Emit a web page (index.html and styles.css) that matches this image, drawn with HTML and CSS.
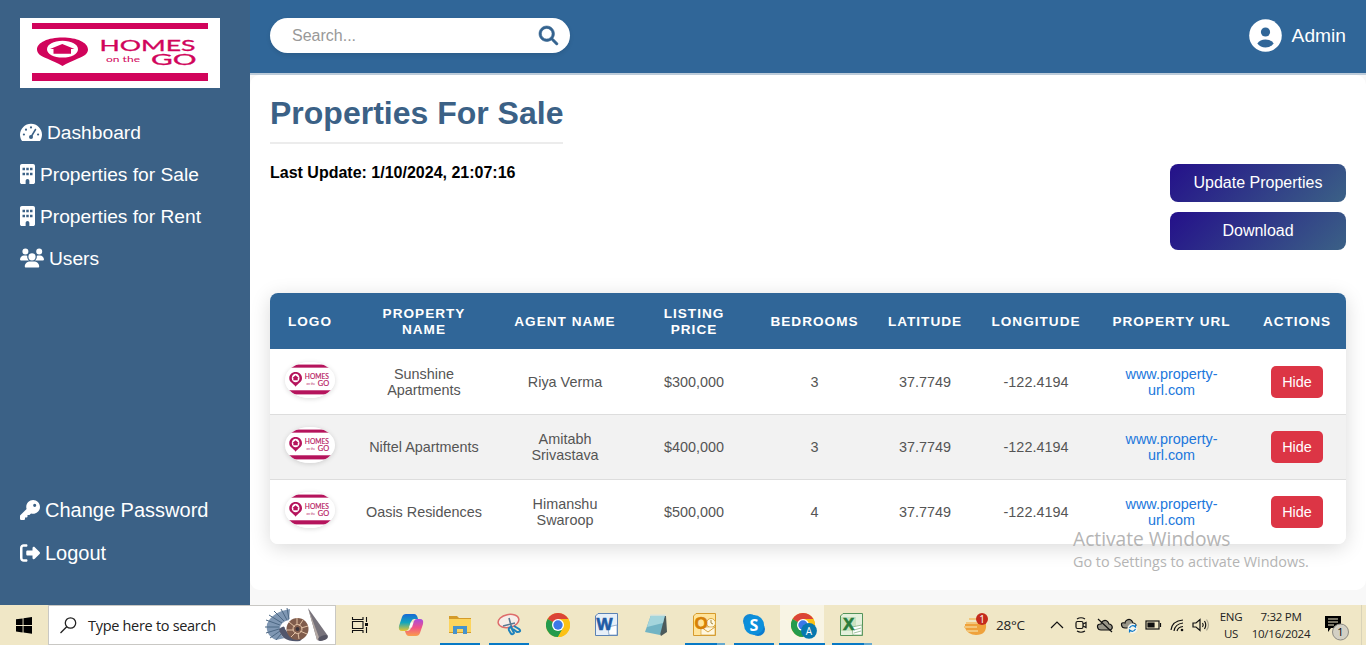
FILE: index.html
```html
<!DOCTYPE html>
<html lang="en">
<head>
<meta charset="utf-8">
<title>Properties For Sale</title>
<link rel="stylesheet" href="styles.css">
</head>
<body>
<svg class="defs" width="0" height="0">
  <symbol id="logo" viewBox="0 0 200 70" preserveAspectRatio="none">
    <rect width="200" height="70" fill="#fff"/>
    <g fill="currentColor">
      <rect x="12" y="5" width="176" height="6"/>
      <rect x="12" y="55" width="176" height="8"/>
      <path fill-rule="evenodd" d="M42.500 48C38 45 33 43.500 27 40.500C20 38 17 35 17 31.500C17 24.500 28 19.500 42.500 19.500S68 24.500 68 31.500C68 35 65 38 58 40.500C52 43.500 47 45 42.500 48ZM42.500 22.800C33.500 22.800 27 26.500 27 31.200S33.500 39.500 42.500 39.500S58 35.900 58 31.200S51.500 22.800 42.500 22.800Z"/>
      <path d="M42.300 26L54.500 31H51V35.700H33.500V31H30Z"/>
      <g font-family="Lato, sans-serif">
        <text x="79.500" y="33" font-size="15" textLength="96" lengthAdjust="spacingAndGlyphs" stroke="currentColor" stroke-width=".3">HOMES</text>
        <text x="86" y="44" font-size="7.500" textLength="34" lengthAdjust="spacingAndGlyphs">on the</text>
        <text x="131" y="47.300" font-size="14.500" textLength="45.500" lengthAdjust="spacingAndGlyphs" stroke="currentColor" stroke-width=".3">GO</text>
      </g>
    </g>
  </symbol>
  <symbol id="building" viewBox="0 0 384 512">
    <path fill-rule="evenodd" d="M48 0C21.500 0 0 21.500 0 48V464c0 26.500 21.500 48 48 48h96V432c0-26.500 21.500-48 48-48s48 21.500 48 48v80h96c26.500 0 48-21.500 48-48V48c0-26.500-21.500-48-48-48H48zM64 96h64v64H64zM160 96h64v64h-64zM256 96h64v64h-64zM64 224h64v64H64zM160 224h64v64h-64zM256 224h64v64h-64z"/>
  </symbol>
  <symbol id="chrome" viewBox="0 0 24 24">
    <circle cx="12" cy="12" r="12" fill="#fbc116"/>
    <path d="M12 12L1.600 6A12 12 0 0 1 22.400 6Z" fill="#db4437"/>
    <path d="M12 12L1.600 6A12 12 0 0 0 12 24L17 15Z" fill="#249b4d"/>
    <path d="M12 6H22.400A12 12 0 0 1 12 24L17.200 15Z" fill="#fbc116"/>
    <circle cx="12" cy="12" r="6" fill="#fff"/>
    <circle cx="12" cy="12" r="4.700" fill="#3b78e7"/>
  </symbol>
</svg>

<div class="app">
  <aside class="sidebar">
    <svg class="brand"><use href="#logo"/></svg>
    <nav class="nav">
      <a class="nav-item"><svg width="22" height="19" viewBox="0 0 22 19"><path d="M11 .8A11 11 0 0 0 0 11.600C0 13.800.6 15.700 1.500 17.200Q2 18.100 3 18.100H19Q20 18.100 20.500 17.200C21.400 15.700 22 13.800 22 11.600A11 11 0 0 0 11 .8Z"/><g class="dial"><circle cx="3.900" cy="11.500" r="1.100"/><circle cx="6" cy="6.700" r="1.100"/><circle cx="11" cy="4.400" r="1.100"/><circle cx="18.100" cy="11.500" r="1.100"/><circle cx="11" cy="14" r="2"/><path d="M11 14L15.500 6.500" fill="none" stroke="#3b6186" stroke-width="1.500" stroke-linecap="round"/></g></svg><span>Dashboard</span></a>
      <a class="nav-item"><svg width="15" height="20"><use href="#building"/></svg><span>Properties for Sale</span></a>
      <a class="nav-item"><svg width="15" height="20"><use href="#building"/></svg><span>Properties for Rent</span></a>
      <a class="nav-item"><svg width="24" height="20" viewBox="0 0 640 512"><path d="M144 0a80 80 0 1 1 0 160A80 80 0 1 1 144 0zM512 0a80 80 0 1 1 0 160A80 80 0 1 1 512 0zM0 298.700C0 239.800 47.800 192 106.700 192h42.700c15.900 0 31 3.500 44.600 9.700c-1.300 7.200-1.900 14.700-1.900 22.300c0 38.200 16.800 72.500 43.300 96H21.300C9.600 320 0 310.400 0 298.700zM405.300 320c26.600-23.500 43.300-57.800 43.300-96c0-7.600-.7-15-1.900-22.300c13.600-6.300 28.700-9.700 44.600-9.700h42.700C592.200 192 640 239.800 640 298.700c0 11.800-9.600 21.300-21.300 21.300H405.300zM224 224a96 96 0 1 1 192 0 96 96 0 1 1-192 0zM128 485.300C128 411.700 187.700 352 261.300 352H378.700C452.300 352 512 411.700 512 485.300c0 14.700-11.900 26.700-26.700 26.700H154.700c-14.700 0-26.700-11.900-26.700-26.700z"/></svg><span>Users</span></a>
    </nav>
    <nav class="nav nav-bottom">
      <a class="nav-item"><svg width="20" height="20" viewBox="0 0 512 512"><path d="M336 352c97.200 0 176-78.800 176-176S433.200 0 336 0S160 78.800 160 176c0 18.700 2.900 36.800 8.300 53.700L7 391c-4.500 4.500-7 10.600-7 17v80c0 13.300 10.700 24 24 24h80c13.300 0 24-10.700 24-24V448h40c13.300 0 24-10.700 24-24V384h40c6.400 0 12.500-2.500 17-7l33.300-33.300c16.900 5.400 35 8.300 53.700 8.300zM376 96a40 40 0 1 1 0 80 40 40 0 1 1 0-80z"/></svg><span>Change Password</span></a>
      <a class="nav-item"><svg width="20" height="20" viewBox="0 0 512 512"><path d="M377.900 105.900L500.700 228.700c7.200 7.200 11.300 17.100 11.300 27.300s-4.100 20.100-11.300 27.300L377.900 406.100c-6.400 6.400-15 9.900-24 9.900c-18.700 0-33.900-15.200-33.900-33.900l0-62.100-128 0c-17.700 0-32-14.300-32-32l0-64c0-17.700 14.300-32 32-32l128 0 0-62.100c0-18.700 15.200-33.900 33.900-33.900c9 0 17.600 3.600 24 9.900zM160 96L96 96c-17.700 0-32 14.300-32 32l0 256c0 17.700 14.300 32 32 32l64 0c17.700 0 32 14.300 32 32s-14.300 32-32 32l-64 0c-53 0-96-43-96-96L0 128C0 75 43 32 96 32l64 0c17.700 0 32 14.300 32 32s-14.300 32-32 32z"/></svg><span>Logout</span></a>
    </nav>
  </aside>

  <div class="page">
    <header class="topbar">
      <div class="search"><span>Search...</span>
        <svg width="19" height="19" viewBox="0 0 512 512"><path stroke="#34638f" stroke-width="16" d="M416 208c0 45.900-14.900 88.300-40 122.700L502.600 457.400c12.500 12.500 12.500 32.800 0 45.300s-32.800 12.500-45.300 0L330.700 376c-34.400 25.200-76.800 40-122.700 40C93.100 416 0 322.900 0 208S93.100 0 208 0S416 93.100 416 208zM208 352a144 144 0 1 0 0-288 144 144 0 1 0 0 288z"/></svg>
      </div>
      <div class="account">
        <svg width="33" height="33" viewBox="0 0 33 33"><circle cx="16.500" cy="16.500" r="16.300" fill="#fff"/><circle cx="16.500" cy="13" r="4.600"/><path d="M8.300 24.500Q11 20.500 16.500 20.500T24.700 24.500Q21.500 28.500 16.500 28.500T8.300 24.500Z"/></svg>
        <span>Admin</span>
      </div>
    </header>

    <main class="content">
      <h1 class="title">Properties For Sale</h1>
      <div class="toolbar">
        <p class="updated">Last Update: 1/10/2024, 21:07:16</p>
        <div class="actions">
          <button class="btn">Update Properties</button>
          <button class="btn">Download</button>
        </div>
      </div>
      <div class="table-card">
        <table class="table">
          <colgroup><col class="c-logo"><col class="c-name"><col class="c-agent"><col class="c-price"><col class="c-beds"><col class="c-lat"><col class="c-lon"><col class="c-url"><col class="c-act"></colgroup>
          <thead><tr><th>Logo</th><th>Property<br>Name</th><th>Agent Name</th><th>Listing<br>Price</th><th>Bedrooms</th><th>Latitude</th><th>Longitude</th><th>Property URL</th><th>Actions</th></tr></thead>
          <tbody>
            <tr><td><svg class="thumb"><use href="#logo"/></svg></td><td>Sunshine<br>Apartments</td><td>Riya Verma</td><td>$300,000</td><td>3</td><td>37.7749</td><td>-122.4194</td><td><a class="link">www.property-<br>url.com</a></td><td><button class="hide">Hide</button></td></tr>
            <tr><td><svg class="thumb"><use href="#logo"/></svg></td><td>Niftel Apartments</td><td>Amitabh<br>Srivastava</td><td>$400,000</td><td>3</td><td>37.7749</td><td>-122.4194</td><td><a class="link">www.property-<br>url.com</a></td><td><button class="hide">Hide</button></td></tr>
            <tr><td><svg class="thumb"><use href="#logo"/></svg></td><td>Oasis Residences</td><td>Himanshu<br>Swaroop</td><td>$500,000</td><td>4</td><td>37.7749</td><td>-122.4194</td><td><a class="link">www.property-<br>url.com</a></td><td><button class="hide">Hide</button></td></tr>
          </tbody>
        </table>
      </div>
    </main>
  </div>
</div>

<div class="watermark">
  <div class="wm-title">Activate Windows</div>
  <div class="wm-sub">Go to Settings to activate Windows.</div>
</div>

<footer class="taskbar">
  <div class="start"><svg width="16" height="17" viewBox="0 0 16 17"><path d="M0 2.300L6.600 1.400V8H0ZM7.500 1.300L16 0V8H7.500ZM0 8.900H6.600V15.400L0 14.500ZM7.500 8.900H16V16.700L7.500 15.500Z"/></svg></div>
  <div class="tb-search">
    <svg width="17" height="17" viewBox="0 0 17 17" fill="none" stroke="#222" stroke-width="1.300"><circle cx="10.500" cy="6" r="5.200"/><path d="M6.700 9.800L.5 16"/></svg>
    <span>Type here to search</span>
    <svg class="fossils" width="66" height="36" viewBox="0 0 66 36">
      <path d="M12 33Q1 28 3 17Q8 5 26 2L25 13Q16 15 16 22Q16 29 21 31Z" fill="#7f97b3"/>
      <g stroke="#4d6884" stroke-width="1" fill="none"><path d="M12 33L17 27M6 31L16 24M2 26L15 22M1 20L15 20M2 13L16 18M5 8L18 16M10 4L20 14M17 2L23 13M23 1L25 12"/></g>
      <path d="M15 22Q21 17 21 22Q27 33 41 29L36 34Q18 36 15 22Z" fill="#51566c"/>
      <ellipse cx="33.500" cy="22" rx="11" ry="11" fill="#805c4c"/>
      <g fill="none" stroke="#e2c1a4" stroke-width="1"><path d="M33 11V18M25 15L31 20M23 23L30 23M27 30L32 25M35 32L34 26M43 27L36 24M44 19L37 21M39 13L35 19"/><circle cx="33.500" cy="22" r="4.500"/></g>
      <circle cx="33.500" cy="22" r="2" fill="#39323a"/>
      <path d="M44 1L64 29Q60 35 53 33Z" fill="#77737b"/><path d="M44 1L56 33L53 33Z" fill="#b5aaa5"/><ellipse cx="59" cy="31" rx="5" ry="2.500" fill="#565563" transform="rotate(-20 59 31)"/>
    </svg>
  </div>
  <div class="taskview"><svg width="18" height="18" viewBox="0 0 18 18" fill="none" stroke="#111" stroke-width="1.100"><path d="M1.500 1V3.500H12V1M1.500 17V14.500H12V17M1.500 5.500V12.500H12V5.500ZM15.500 1V6M15.500 11V17"/><path d="M14 7H17V10H14Z" fill="#111" stroke="none"/></svg></div>
  <div class="apps">
    <div class="app-btn"><svg width="26" height="24" viewBox="0 0 26 24">
      <defs><linearGradient id="cp1" x2="0" y2="1"><stop stop-color="#1769d5"/><stop offset=".5" stop-color="#12a5bd"/><stop offset="1" stop-color="#e9c52f"/></linearGradient><linearGradient id="cp2" x2="0" y2="1"><stop stop-color="#a64be0"/><stop offset=".5" stop-color="#f05288"/><stop offset="1" stop-color="#fa9d4b"/></linearGradient></defs>
      <path d="M8 1H16Q19 1 20 6H16Q14 6 13 9L11 15Q10 18 7 18H4Q0 18 1 13L4 4Q5 1 8 1Z" fill="url(#cp1)"/><path d="M19 6H22Q26 6 25 11L22 20Q21 23 18 23H11Q8 23 7 18H10Q12 18 13 15L16 8Q17 6 19 6Z" fill="url(#cp2)"/><path d="M12.500 9.500H15.500L14 14.500H11Z" fill="#fff" opacity=".8"/></svg></div>
    <div class="app-btn run"><svg width="22" height="20" viewBox="0 0 22 20"><path d="M0 1H8L10 3H22V18H0Z" fill="#d49b2a"/><path d="M0 4H22V17H0Z" fill="#fcd45d"/><path d="M4 19V11H18V19H14V14H8V19Z" fill="#4693cc"/></svg></div>
    <div class="app-btn run"><svg width="24" height="24" viewBox="0 0 24 24" fill="none"><ellipse cx="11.500" cy="8" rx="10.500" ry="6.500" transform="rotate(-12 11.500 8)" fill="#f6eee9" stroke="#de6c6b" stroke-width="1.500"/><path d="M12 5L15 16M6 13L18 10" stroke="#5a7891" stroke-width="1.600"/><path d="M14 14Q10 15 13 19Q15 23 17 20ZM17 13L22 16Q25 19 20 19L16 16" stroke="#1d82bd" stroke-width="2"/></svg></div>
    <div class="app-btn"><svg width="24" height="24"><use href="#chrome"/></svg></div>
    <div class="app-btn"><svg class="office" width="23" height="23" viewBox="0 0 23 23"><path d="M3 .5H22.500V22.500H.5V3Z" fill="#e7eff8" stroke="#5b82b4"/><path d="M13 14L22 12V22H14Z" fill="#fff" stroke="#6e92bd" stroke-width=".7"/><text x="1.500" y="16.500" class="glyph" fill="#1e5aa4" stroke="#1e5aa4">W</text></svg></div>
    <div class="app-btn"><svg width="24" height="23" viewBox="0 0 24 23"><path d="M7 1L22 2L23 18L17 22Z" fill="#4c5a5b"/><path d="M7 1H21L16 21L1 18Z" fill="#72b4c4"/><path d="M7 1H21L19 9L3 13Z" fill="#a4d5dc"/><path d="M6 1H22" stroke="#e0e5d8" stroke-width="1.500"/></svg></div>
    <div class="app-btn run more"><svg class="office" width="23" height="23" viewBox="0 0 23 23"><path d="M3 .5H22.500V22.500H.5V3Z" fill="#ffe49b" stroke="#d69b2c"/><circle cx="18" cy="10" r="4.500" fill="#fff8df" stroke="#d9a73f"/><path d="M18 7V10L20 11" fill="none" stroke="#a68a42"/><path d="M8 14H22V22H8Z" fill="#fff7df" stroke="#d6a443" stroke-width=".7"/><path d="M8 14L15 19L22 14" fill="none" stroke="#d6a443"/><text x="1.500" y="16" class="glyph" fill="#d68005" stroke="#d68005">O</text></svg></div>
    <div class="app-btn run"><svg width="22" height="22" viewBox="0 0 22 22"><circle cx="7" cy="7" r="7" fill="#1388d3"/><circle cx="15" cy="15" r="7" fill="#0a7bd0"/><circle cx="11" cy="11" r="10" fill="#0c8fdb"/><text x="11" y="16.500" text-anchor="middle" class="skype">S</text></svg></div>
    <div class="app-btn run active"><svg width="27" height="27" viewBox="0 0 27 27"><svg width="24" height="24" x="1" y="1"><use href="#chrome"/></svg><circle cx="19" cy="18.800" r="7.900" fill="#0878ae"/><text x="19" y="22.500" text-anchor="middle" class="badge-a">A</text></svg></div>
    <div class="app-btn run more"><svg class="office" width="23" height="23" viewBox="0 0 23 23"><path d="M3 .5H22.500V22.500H.5V3Z" fill="#e4f0dc" stroke="#53945a"/><path d="M1 4H16V18H1Z" fill="#cae2c1"/><path d="M12 14L22 12V22H13Z" fill="#fff" stroke="#79a872" stroke-width=".7"/><path d="M14 17L21 15M14 20L21 18" stroke="#79a872" stroke-width=".7"/><text x="3" y="17" class="glyph" fill="#277c3d" stroke="#277c3d">X</text></svg></div>
  </div>
  <div class="tray">
    <svg class="weather" width="24" height="24" viewBox="0 0 24 24"><path d="M1 11H22Q23 22 12 22Q4 22 1 15Z" fill="#efa23c"/><path d="M5 6H15M2 10H17M0 14H13M3 18H14" stroke="#f2c77c" stroke-width="2"/><circle cx="18" cy="6" r="6" fill="#c42b1c"/><text x="18" y="9.500" text-anchor="middle" class="alert">1</text></svg>
    <span class="temp">28°C</span>
    <div class="tray-icons">
      <svg viewBox="0 0 18 18"><path d="M3 12L9 6L15 12"/></svg>
      <svg viewBox="0 0 18 18"><rect x="4" y="5.500" width="7" height="7" rx="1.500"/><path d="M11 8L14 6.500V11.500L11 10M5 3Q9 .5 13 3M5 15Q9 17.500 13 15"/></svg>
      <svg viewBox="0 0 18 18"><path d="M5 14H14Q17 13 16 10Q15 8 13 8Q11 3 7 5Q5 6 5 8Q1 8 1.500 11Q2 14 5 14Z" fill="#999689"/><path d="M2 3L16 16"/></svg>
      <svg viewBox="0 0 18 18"><path d="M5 12H14Q17 12 16 9Q15 7 13 7Q11 2 7 4Q5 5 5 7Q1 6 1.500 9Q2 12 5 12Z" fill="#999689"/><circle cx="12.500" cy="12.500" r="5" fill="#f6f5ec" stroke="none"/><path d="M9.500 12Q12 8 15.500 11V8.500M15.500 13Q13 17 9.500 14V16.500" stroke="#0877c7"/></svg>
      <svg viewBox="0 0 18 18"><rect x="2" y="5" width="13" height="8"/><path d="M4 7H10V11H4Z" fill="#111"/><path d="M16.500 7V11"/></svg>
      <svg viewBox="0 0 18 18"><path d="M3 14Q4 5 15 4M6 15Q7 8 15 7M9 15Q10 11 15 10.500"/><circle cx="14" cy="14" r="1.300" fill="#111" stroke="none"/></svg>
      <svg viewBox="0 0 18 18"><path d="M1 7H4L8 3.500V14.500L4 11H1Z"/><path d="M10.500 7Q12 9 10.500 11M12.500 5Q15 9 12.500 13"/><path d="M14.500 3.500Q18.500 9 14.500 14.500" stroke="#aaa58f"/></svg>
    </div>
    <div class="lang">ENG<br>US</div>
    <div class="clock">7:32 PM<br>10/16/2024</div>
    <svg class="notice" width="26" height="26" viewBox="0 0 26 26"><path d="M1 1H17V13H7L4 17V13H1Z"/><path d="M4 4H14M4 7H14M4 10H10" stroke="#eee6c8" stroke-width="1.100"/><circle cx="16.500" cy="17" r="8" fill="#d3d0c4" stroke="#8d8b83"/><text x="16.500" y="21" text-anchor="middle">1</text></svg>
    <span class="peek"></span>
  </div>
</footer>
</body>
</html>
```
FILE: styles.css
```css
* { box-sizing: border-box; }
body {
  margin: 0;
  height: 645px;
  overflow: hidden;
  font-family: "Liberation Sans", Arial, sans-serif;
  background: #f8f8f8;
}
svg { display: block; flex: none; overflow: visible; }
.defs { position: absolute; }
.app { display: flex; height: 605px; }

.sidebar {
  width: 250px;
  flex: none;
  display: flex;
  flex-direction: column;
  padding: 18px 20px 30px;
  background: #3b6186;
  color: #fff;
}
.brand { width: 200px; height: 70px; color: #d1045b; }
.nav { display: flex; flex-direction: column; margin-top: 23px; font-size: 19.2px; }
.nav-item { display: flex; align-items: center; gap: 5px; height: 42px; white-space: nowrap; }
.nav-item svg { fill: #fff; }
.nav-item span { padding-top: 2px; }
.nav .dial { fill: #3b6186; }
.nav-bottom { margin-top: auto; font-size: 20px; }
.nav-bottom .nav-item { height: 43px; }
.nav-bottom svg { margin-bottom: 2px; }
.nav-bottom span { padding-top: 0; }

.page { flex: 1; display: flex; flex-direction: column; }
.topbar {
  height: 75px;
  display: flex;
  justify-content: space-between;
  align-items: flex-start;
  padding: 18px 20px 0;
  background: #306698;
  border-bottom: 2px solid #bccbd9;
}
.search {
  width: 300px;
  height: 35px;
  display: flex;
  align-items: center;
  justify-content: space-between;
  padding: 0 12px 0 22px;
  background: #fff;
  border-radius: 18px;
  box-shadow: 0 2px 4px rgba(0, 0, 0, .1);
  color: #999;
  font-size: 16px;
}
.search svg { fill: #34638f; }
.account { display: flex; align-items: center; gap: 10px; padding-top: 1px; color: #fff; font-size: 19.2px; }
.account svg { fill: #306698; }

.content { height: 515px; padding: 18px 20px 0; background: #fff; border-radius: 10px; }
.title {
  width: max-content;
  height: 51px;
  margin: 0;
  padding-top: 2px;
  border-bottom: 2px solid #ececec;
  color: #3b6186;
  font-size: 32px;
  line-height: 37px;
}
.toolbar { display: flex; justify-content: space-between; height: 129px; padding-top: 20px; }
.updated { margin: 0; font-size: 16px; font-weight: bold; line-height: 18px; }
.actions { display: flex; flex-direction: column; gap: 10px; }
.btn {
  width: 176px;
  height: 38px;
  padding: 0;
  border: 0;
  border-radius: 8px;
  background: linear-gradient(135deg, #24108a, #3b6186);
  color: #fff;
  font: 16px "Liberation Sans", Arial, sans-serif;
}
.table-card { margin-top: 20px; border-radius: 8px; overflow: hidden; box-shadow: 0 4px 20px rgba(0, 0, 0, .15); }
.table { width: 1076px; border-spacing: 0; table-layout: fixed; text-align: center; font-size: 14.4px; line-height: 16px; }
.c-logo { width: 80px; } .c-name { width: 148px; } .c-agent { width: 134px; }
.c-price { width: 124px; } .c-beds { width: 117px; } .c-lat { width: 104px; }
.c-lon { width: 118px; } .c-url { width: 153px; } .c-act { width: 98px; }
.table th { height: 56px; padding: 1px 0 0; background: #306698; color: #fff; font-size: 13.6px; letter-spacing: 1px; text-transform: uppercase; }
.table td { height: 65px; padding: 0; border-bottom: 1px solid #ddd; color: #555; background: #fff; }
.table tbody tr:first-child td { height: 66px; padding-top: 1px; }
.table tbody tr:last-child td { height: 64px; border-bottom: 0; }
.table tbody tr:nth-child(even) td { background: #f2f2f2; }
.thumb { width: 50px; height: 36px; margin: -4px auto 0; border-radius: 50%; overflow: hidden; color: #b5145c; box-shadow: 0 1px 5px rgba(0, 0, 0, .15); }
.link { color: #2177dc; }
.hide { display: block; width: 52px; height: 32px; margin: 0 auto; padding: 0; border: 0; border-radius: 5px; background: #dc3545; color: #fff; font: 14.4px "Liberation Sans", Arial, sans-serif; }

.watermark { position: absolute; left: 1073px; top: 527px; color: #b4b4b4; font-family: "Open Sans", "Noto Sans", sans-serif; white-space: nowrap; }
.wm-title { font-size: 19.2px; line-height: 24px; }
.wm-sub { font-size: 14.4px; line-height: 22px; }

.taskbar { display: flex; height: 40px; background: #f0e7c6; font-family: "Open Sans", "Noto Sans", sans-serif; color: #222; }
.start { width: 48px; display: flex; align-items: center; justify-content: center; }
.tb-search { width: 288px; display: flex; align-items: center; padding-left: 11px; background: #fff; border: 1px solid #c9c8c4; font-size: 14.5px; letter-spacing: -.3px; white-space: nowrap; }
.tb-search span { width: 166px; margin-left: 11px; }
.fossils { margin-left: 10px; }
.taskview { width: 50.5px; padding-right: 2px; display: flex; align-items: center; justify-content: center; }
.apps { display: flex; }
.app-btn { position: relative; width: 49px; display: flex; align-items: center; justify-content: center; }
.run::after { content: ""; position: absolute; left: 4px; bottom: 0; width: 40px; height: 2px; background: #0879c5; }
.more::after { background: linear-gradient(90deg, #0879c5 80%, #65a9cf 80%); }
.active { background: linear-gradient(90deg, transparent 1px, #f8f4e4 1px 45px, transparent 45px); }
.active::after { left: 0; width: 46px; }
.office { margin: 0 2px 2px 0; }
.glyph { font: bold 17px "Liberation Sans", sans-serif; stroke-width: .6px; }
.skype { font: bold 16px "Open Sans", sans-serif; fill: #fff; }
.badge-a { font: 10px "Open Sans", sans-serif; fill: #fff; }
.alert { font: 10px "Open Sans", sans-serif; fill: #fff; }

.tray { display: flex; align-items: center; margin-left: auto; width: 402px; }
.temp { width: 49px; margin-left: 8px; font-size: 13.5px; letter-spacing: -.2px; white-space: nowrap; }
.tray-icons { display: flex; }
.tray-icons svg { width: 18px; height: 18px; margin: 0 3px; fill: none; stroke: #111; stroke-width: 1.2; }
.lang, .clock { font-size: 11.5px; line-height: 17px; letter-spacing: -.25px; text-align: center; white-space: nowrap; }
.lang { width: 36px; }
.clock { width: 64px; }
.notice { margin: 6px 0 0 11px; font-size: 11px; }
.peek { width: 1px; height: 40px; margin-left: 11px; background: #d9d3b9; }
```
